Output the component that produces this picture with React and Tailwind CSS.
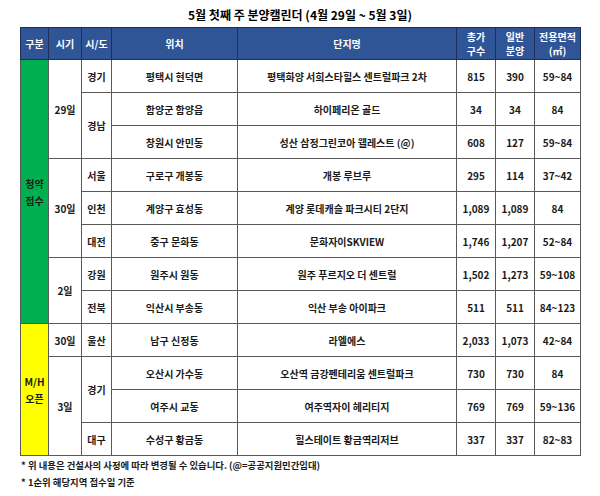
import React from "react";

const rows = [
  { date: "29일", dateSpan: 3, region: "경기", loc: "평택시 현덕면", name: "평택화양 서희스타힐스 센트럴파크 2차", total: "815", sale: "390", area: "59~84" },
  { region: "경남", regionSpan: 2, loc: "함양군 함양읍", name: "하이페리온 골드", total: "34", sale: "34", area: "84" },
  { noRegion: true, loc: "창원시 안민동", name: "성산 삼정그린코아 웰레스트 (@)", total: "608", sale: "127", area: "59~84" },
  { date: "30일", dateSpan: 3, region: "서울", loc: "구로구 개봉동", name: "개봉 루브루", total: "295", sale: "114", area: "37~42" },
  { region: "인천", loc: "계양구 효성동", name: "계양 롯데캐슬 파크시티 2단지", total: "1,089", sale: "1,089", area: "84" },
  { region: "대전", loc: "중구 문화동", name: "문화자이SKVIEW", total: "1,746", sale: "1,207", area: "52~84" },
  { date: "2일", dateSpan: 2, region: "강원", loc: "원주시 원동", name: "원주 푸르지오 더 센트럴", total: "1,502", sale: "1,273", area: "59~108" },
  { region: "전북", loc: "익산시 부송동", name: "익산 부송 아이파크", total: "511", sale: "511", area: "84~123" },
  { date: "30일", dateSpan: 1, region: "울산", loc: "남구 신정동", name: "라엘에스", total: "2,033", sale: "1,073", area: "42~84" },
  { date: "3일", dateSpan: 3, region: "경기", regionSpan: 2, loc: "오산시 가수동", name: "오산역 금강펜테리움 센트럴파크", total: "730", sale: "730", area: "84" },
  { noRegion: true, loc: "여주시 교동", name: "여주역자이 헤리티지", total: "769", sale: "769", area: "59~136" },
  { region: "대구", loc: "수성구 황금동", name: "힐스테이트 황금역리저브", total: "337", sale: "337", area: "82~83" },
];

const td = "border border-[#595959] text-center align-middle px-0";

export default function App() {
  return (
    <div
      className="w-[600px] h-[496px] bg-white text-[#1a1a1a] font-bold"
      style={{ fontFamily: '"Noto Sans CJK KR", "Noto Sans", sans-serif' }}
    >
      <div className="h-[27px] pt-[7px] text-center text-[12px] leading-[16px] text-black">
        5월 첫째 주 분양캘린더 (4월 29일 ~ 5월 3일)
      </div>
      <div className="px-[20px]">
        <table className="w-[560px] table-fixed border-collapse border border-[#7f7f7f] text-[10px] leading-[13px]">
          <colgroup>
            <col className="w-[28px]" />
            <col className="w-[33px]" />
            <col className="w-[30px]" />
            <col className="w-[126px]" />
            <col className="w-[219px]" />
            <col className="w-[39px]" />
            <col className="w-[39px]" />
            <col className="w-[46px]" />
          </colgroup>
          <thead>
            <tr className="h-[32px] bg-[#2f5597] text-white">
              <th className="border border-[#1f2f55] font-bold">구분</th>
              <th className="border border-[#1f2f55] font-bold">시기</th>
              <th className="border border-[#1f2f55] font-bold">시/도</th>
              <th className="border border-[#1f2f55] font-bold">위치</th>
              <th className="border border-[#1f2f55] font-bold">단지명</th>
              <th className="border border-[#1f2f55] font-bold leading-[14px]">
                총가<br />구수
              </th>
              <th className="border border-[#1f2f55] font-bold leading-[14px]">
                일반<br />분양
              </th>
              <th className="border border-[#1f2f55] font-bold leading-[14px]">
                전용면적<br />(㎡)
              </th>
            </tr>
          </thead>
          <tbody>
            {rows.map((r, i) => (
              <tr key={i} className="h-[33px]">
                {i === 0 && (
                  <td rowSpan={8} className={`${td} bg-[#00b050] leading-[17px]`}>
                    청약<br />접수
                  </td>
                )}
                {i === 8 && (
                  <td rowSpan={4} className={`${td} bg-[#ffff00] leading-[17px]`}>
                    M/H<br />오픈
                  </td>
                )}
                {r.date && (
                  <td rowSpan={r.dateSpan} className={td}>
                    {r.date}
                  </td>
                )}
                {!r.noRegion && (
                  <td rowSpan={r.regionSpan || 1} className={td}>
                    {r.region}
                  </td>
                )}
                <td className={td}>{r.loc}</td>
                <td className={td}>{r.name}</td>
                <td className={td}>{r.total}</td>
                <td className={td}>{r.sale}</td>
                <td className={td}>{r.area}</td>
              </tr>
            ))}
          </tbody>
        </table>
        <div className="mt-[1px] text-[9.4px] leading-[17px] pl-[1px]">
          <p>* 위 내용은 건설사의 사정에 따라 변경될 수 있습니다. (@=공공지원민간임대)</p>
          <p>* 1순위 해당지역 접수일 기준</p>
        </div>
      </div>
    </div>
  );
}
